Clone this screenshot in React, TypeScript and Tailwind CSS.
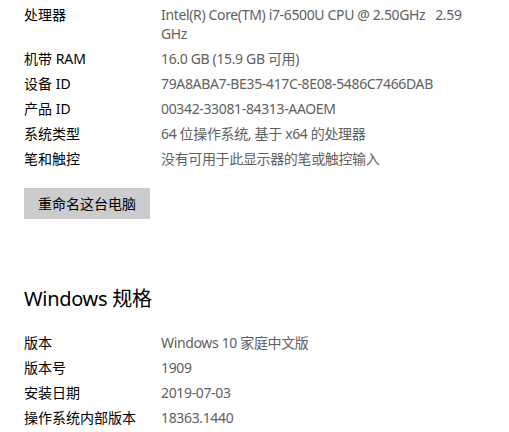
const specs: [string, React.ReactNode][] = [
  ["处理器", <>Intel(R) Core(TM) i7-6500U CPU @ 2.50GHz&nbsp;&nbsp;&nbsp;2.59<br />GHz</>],
  ["机带 RAM", "16.0 GB (15.9 GB 可用)"],
  ["设备 ID", "79A8ABA7-BE35-417C-8E08-5486C7466DAB"],
  ["产品 ID", "00342-33081-84313-AAOEM"],
  ["系统类型", "64 位操作系统, 基于 x64 的处理器"],
  ["笔和触控", "没有可用于此显示器的笔或触控输入"],
];

const winSpecs: [string, string][] = [
  ["版本", "Windows 10 家庭中文版"],
  ["版本号", "1909"],
  ["安装日期", "2019-07-03"],
  ["操作系统内部版本", "18363.1440"],
];

function Row({ label, value }: { label: string; value: React.ReactNode }) {
  return (
    <div className="flex mb-[6px]">
      <div className="w-[137px] shrink-0 text-black">{label}</div>
      <div className="text-[#616161] whitespace-nowrap tracking-[-0.35px]">{value}</div>
    </div>
  );
}

export default function App() {
  return (
    <div
      className="w-[509px] h-[432px] overflow-hidden bg-white pl-[24px] pt-[5px] text-[14px] leading-[19px]"
      style={{ fontFamily: '"Segoe UI", "Noto Sans", "Noto Sans CJK SC", sans-serif' }}
    >
      {specs.map(([l, v]) => (
        <Row key={l} label={l} value={v} />
      ))}
      <button className="mt-[14px] h-[31px] w-[126px] bg-[#cccccc] text-black text-[14px]">
        重命名这台电脑
      </button>
      <h2 className="mt-[66px] text-[20px] leading-[28px] tracking-[-0.3px] text-black">Windows 规格</h2>
      <div className="mt-[20px]">
        {winSpecs.map(([l, v]) => (
          <Row key={l} label={l} value={v} />
        ))}
      </div>
    </div>
  );
}
